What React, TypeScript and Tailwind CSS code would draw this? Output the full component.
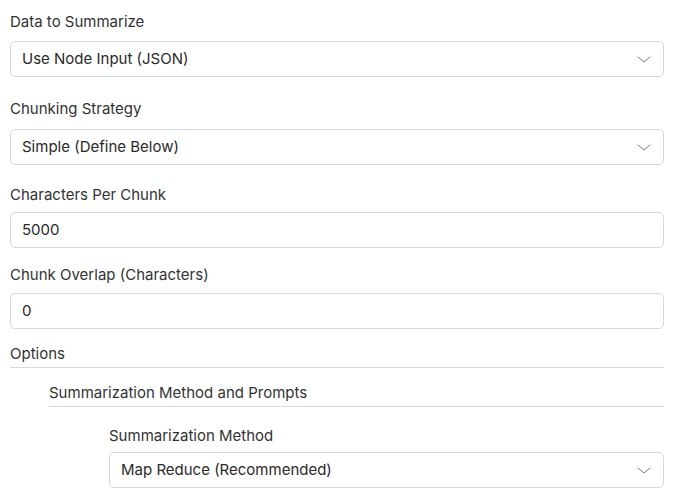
import { ReactNode } from "react";

// --- Small pieces ---
function Chevron() {
    return (
        <svg width="14" height="7" viewBox="0 0 14 7" fill="none" className="shrink-0 mr-[1px]">
            <polyline points="1,1 7,6 13,1" stroke="#7c7c84" strokeWidth="1" strokeLinecap="round" strokeLinejoin="round" />
        </svg>
    );
}

function Box({ children, select = false, className = "" }: { children: ReactNode; select?: boolean; className?: string }) {
    return (
        <div className={`h-9 flex items-center justify-between rounded-[5px] border border-[#d6d7e1] bg-white pl-[11px] pr-[11px] text-[15px] text-[#2a2a2a] ${className}`}>
            <span>{children}</span>
            {select && <Chevron />}
        </div>
    );
}

function Label({ children, className = "" }: { children: ReactNode; className?: string }) {
    return <div className={`leading-5 text-[15px] text-[#333333] ${className}`}>{children}</div>;
}

export default function App() {
    return (
        <div
            className="w-[684px] h-[499px] overflow-hidden bg-white pt-3 pl-[10px] pr-5 flex flex-col"
            style={{ fontFamily: "Inter, 'Noto Sans', sans-serif" }}
        >
            {/* Data to Summarize */}
            <Label>Data to Summarize</Label>
            <Box select className="mt-[9px]">Use Node Input (JSON)</Box>

            {/* Chunking Strategy */}
            <Label className="mt-[22px]">Chunking Strategy</Label>
            <Box select className="mt-[10px]">Simple (Define Below)</Box>

            {/* Characters Per Chunk */}
            <Label className="mt-[20px]">Characters Per Chunk</Label>
            <Box className="mt-[7px]">5000</Box>

            {/* Chunk Overlap */}
            <Label className="mt-[17px]">Chunk Overlap (Characters)</Label>
            <Box className="mt-[8px]">0</Box>

            {/* Options */}
            <div className="mt-[15px] pb-[3px] border-b border-[#d8d9e4]">
                <Label className="text-[#1f1f1f]">Options</Label>
            </div>

            <div className="ml-[39px]">
                <div className="mt-[15px] pb-[3px] border-b border-[#d8d9e4]">
                    <Label className="text-[#1f1f1f]">Summarization Method and Prompts</Label>
                </div>

                <div className="ml-[60px]">
                    <Label className="mt-[19px]">Summarization Method</Label>
                    <Box select className="mt-[6px]">Map Reduce (Recommended)</Box>
                </div>
            </div>
        </div>
    );
}
